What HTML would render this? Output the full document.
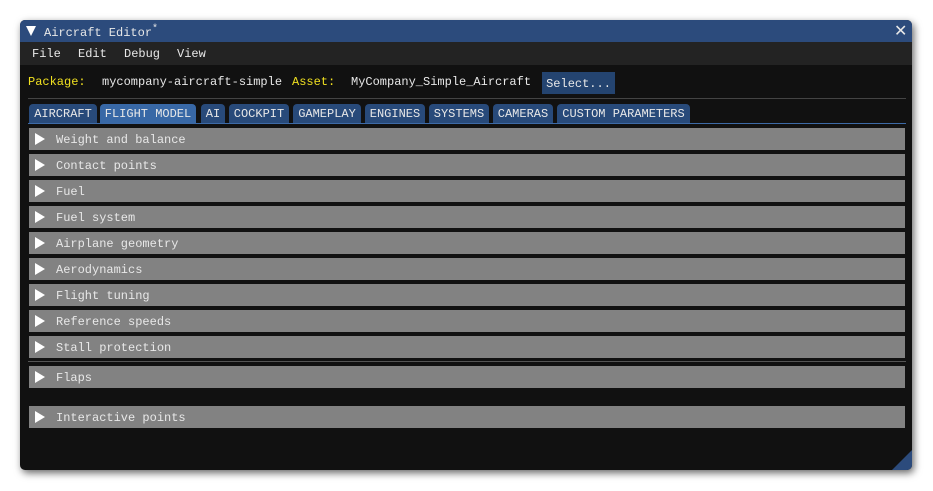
<!DOCTYPE html><html><head><style>
body{margin:0;width:933px;height:491px;background:#fff;font-family:"Liberation Mono",monospace;font-size:12px;color:#e8e8e8;position:relative;overflow:hidden}
.win{position:absolute;left:20px;top:20px;width:892px;height:450px;background:#111;border-radius:5px;box-shadow:2px 3px 8px rgba(0,0,0,.6);overflow:hidden}
.a{position:absolute;white-space:pre}
.title{left:0;top:0;width:892px;height:22px;background:#2c4b7c}
.menu{left:0;top:22px;width:892px;height:23px;background:#232323}
.tab{position:absolute;top:84px;height:19px;background:#284a7a;border-radius:4px 4px 0 0;line-height:20px;text-align:center;color:#e8e8e8}
.row{position:absolute;left:9px;width:876px;height:22px;background:#828282;line-height:24px}
.row span{position:absolute;left:27px}
.row i{position:absolute;left:6px;top:5px;width:0;height:0;border-left:10px solid #fff;border-top:6px solid transparent;border-bottom:6px solid transparent}
.y{color:#f0e020}
</style></head><body><div class="win">
<div class="a title"></div>
<div class="a" style="left:6px;top:6px;width:0;height:0;border-top:10px solid #fff;border-left:5px solid transparent;border-right:5px solid transparent"></div>
<div class="a" style="left:24px;top:4px;font-size:12px">Aircraft Editor<sup style="font-size:10px">*</sup></div>
<div class="a" style="left:874px;top:1px;font-size:16px;font-family:'DejaVu Sans'">✕</div>
<div class="a menu"></div>
<div class="a" style="left:12px;top:27px">File</div>
<div class="a" style="left:58px;top:27px">Edit</div>
<div class="a" style="left:104px;top:27px">Debug</div>
<div class="a" style="left:157px;top:27px">View</div>
<div class="a y" style="left:8px;top:55px">Package:</div>
<div class="a" style="left:82px;top:55px">mycompany-aircraft-simple</div>
<div class="a y" style="left:272px;top:55px">Asset:</div>
<div class="a" style="left:331px;top:55px">MyCompany_Simple_Aircraft</div>
<div class="a" style="left:522px;top:52px;width:73px;height:22px;background:#244470;line-height:24px;text-align:center">Select...</div>
<div class="a" style="left:8px;top:78px;width:878px;height:1px;background:#444"></div>
<div class="tab" style="left:9px;width:68px">AIRCRAFT</div>
<div class="tab" style="left:80px;width:96px;background:#3868a6">FLIGHT MODEL</div>
<div class="tab" style="left:181px;width:24px">AI</div>
<div class="tab" style="left:209px;width:60px">COCKPIT</div>
<div class="tab" style="left:273px;width:68px">GAMEPLAY</div>
<div class="tab" style="left:345px;width:60px">ENGINES</div>
<div class="tab" style="left:409px;width:60px">SYSTEMS</div>
<div class="tab" style="left:473px;width:60px">CAMERAS</div>
<div class="tab" style="left:537px;width:133px">CUSTOM PARAMETERS</div>
<div class="a" style="left:8px;top:103px;width:878px;height:1px;background:#3d6aa6"></div>
<div class="row" style="top:108px"><i></i><span>Weight and balance</span></div>
<div class="row" style="top:134px"><i></i><span>Contact points</span></div>
<div class="row" style="top:160px"><i></i><span>Fuel</span></div>
<div class="row" style="top:186px"><i></i><span>Fuel system</span></div>
<div class="row" style="top:212px"><i></i><span>Airplane geometry</span></div>
<div class="row" style="top:238px"><i></i><span>Aerodynamics</span></div>
<div class="row" style="top:264px"><i></i><span>Flight tuning</span></div>
<div class="row" style="top:290px"><i></i><span>Reference speeds</span></div>
<div class="row" style="top:316px"><i></i><span>Stall protection</span></div>
<div class="a" style="left:8px;top:341px;width:878px;height:1px;background:#555"></div>
<div class="row" style="top:346px"><i></i><span>Flaps</span></div>
<div class="row" style="top:386px"><i></i><span>Interactive points</span></div>
<div class="a" style="left:872px;top:430px;width:0;height:0;border-bottom:20px solid #2c4b7c;border-left:20px solid transparent"></div>
</div></body></html>
